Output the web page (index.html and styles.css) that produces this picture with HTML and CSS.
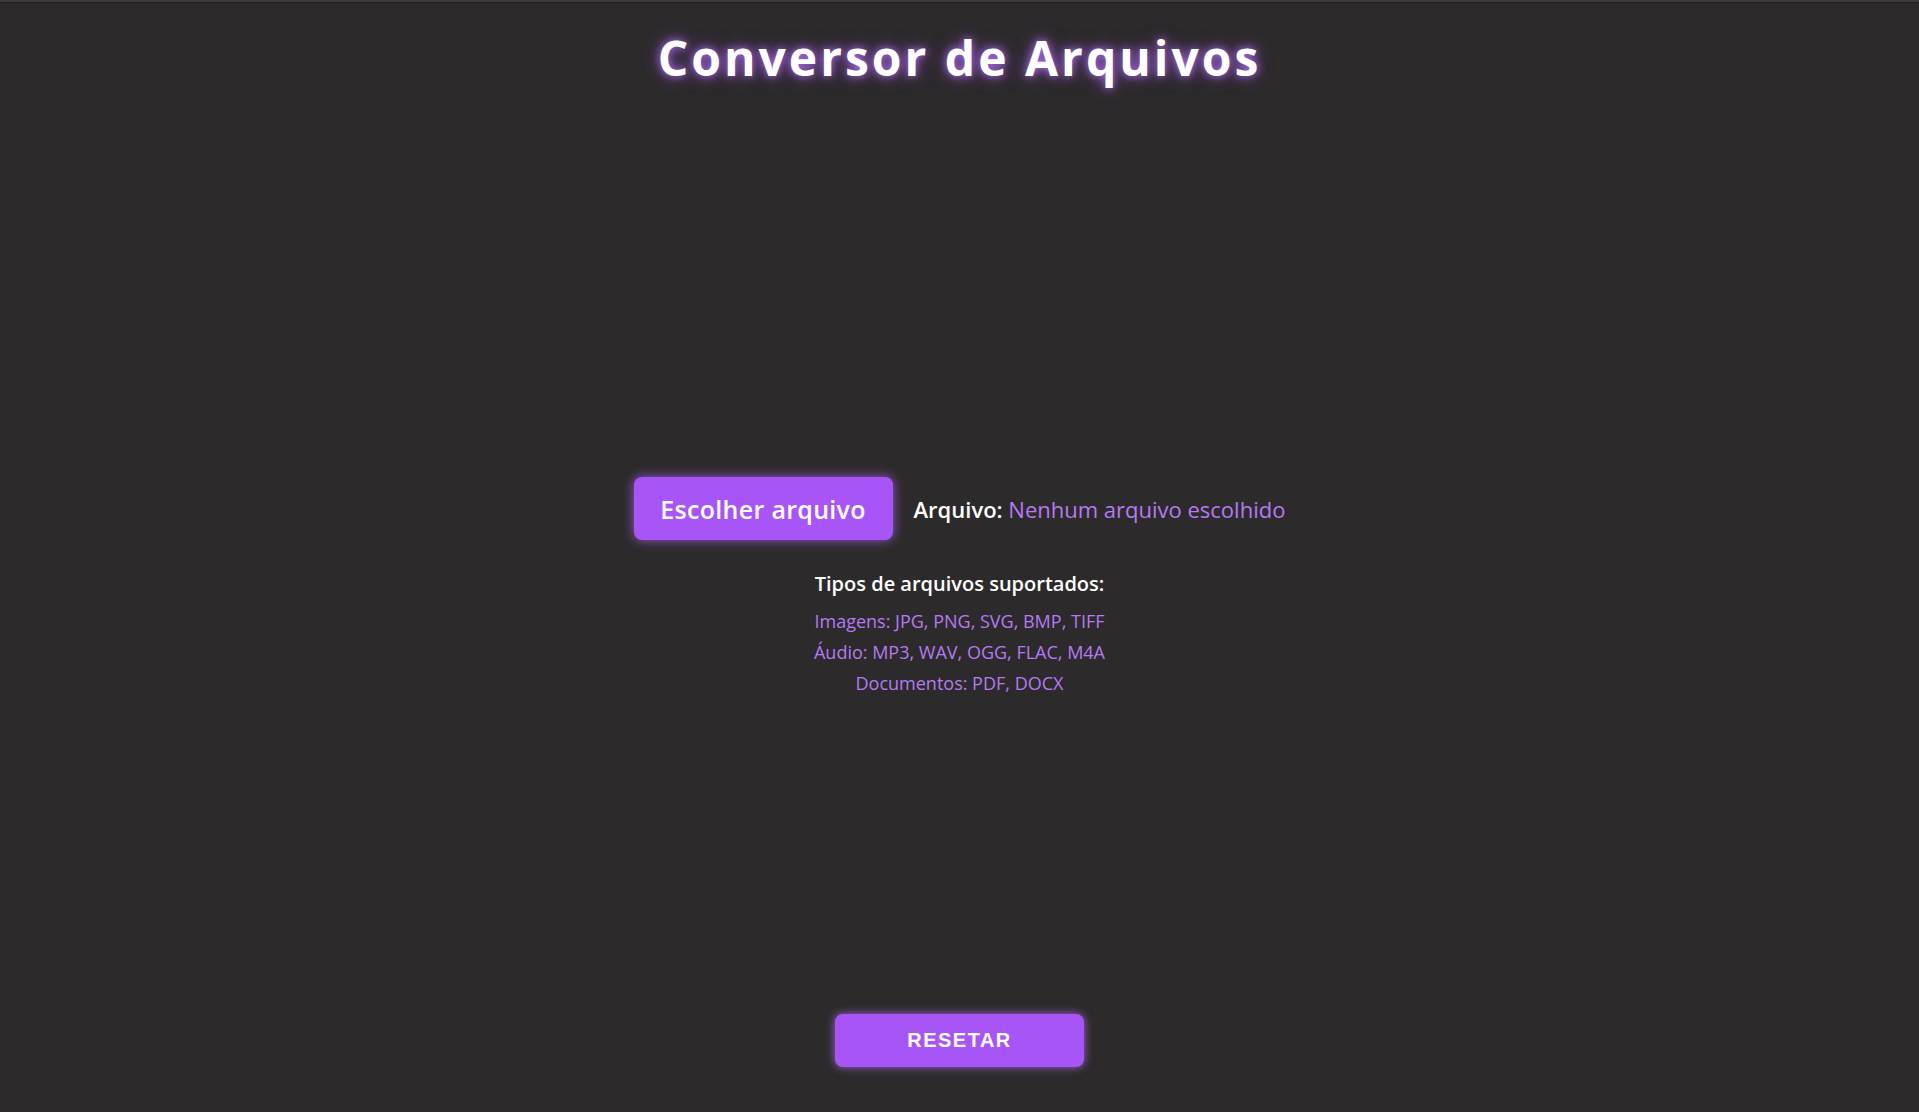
FILE: index.html
```html
<!DOCTYPE html>
<html lang="pt-BR">
<head>
<meta charset="utf-8">
<title>Conversor de Arquivos</title>
<link rel="stylesheet" href="styles.css">
</head>
<body>
<div class="topbar"></div>
<h1 class="title">Conversor de Arquivos</h1>
<main class="main">
  <div class="upload">
    <button class="choose">Escolher arquivo</button>
    <div class="file"><span class="file-label">Arquivo:</span> <span class="file-name">Nenhum arquivo escolhido</span></div>
  </div>
  <div class="types">
    <div class="types-title">Tipos de arquivos suportados:</div>
    <div class="types-line">Imagens: JPG, PNG, SVG, BMP, TIFF</div>
    <div class="types-line">Áudio: MP3, WAV, OGG, FLAC, M4A</div>
    <div class="types-line">Documentos: PDF, DOCX</div>
  </div>
</main>
<footer class="footer">
  <button class="reset">RESETAR</button>
</footer>
</body>
</html>
```
FILE: styles.css
```css
html, body {
  margin: 0;
  padding: 0;
}
body {
  background: #2c2a2b;
  color: #ffffff;
  font-family: "Open Sans", "DejaVu Sans", sans-serif;
  min-height: 100vh;
  display: flex;
  flex-direction: column;
  box-sizing: border-box;
}
.topbar {
  height: 2px;
  background: #3a3a3a;
  border-bottom: 1px solid #1e1e1e;
}
.title {
  margin: 26px 0 0;
  text-align: center;
  font-size: 48px;
  line-height: 58px;
  font-weight: 700;
  letter-spacing: 3px;
  color: #ffffff;
  text-shadow: 0 0 8px rgba(190, 120, 255, 0.9), 0 0 18px rgba(168, 85, 247, 0.6);
}
.main {
  display: flex;
  flex-direction: column;
  align-items: center;
  margin-top: 390px;
}
.upload {
  display: flex;
  align-items: center;
  gap: 21px;
}
.choose {
  width: 259px;
  height: 63px;
  border: none;
  border-radius: 8px;
  background: #a855f7;
  color: #ffffff;
  font-family: "Open Sans", "DejaVu Sans", sans-serif;
  font-size: 25px;
  font-weight: 600;
  letter-spacing: 0.3px;
  box-shadow: 0 0 12px rgba(180, 100, 255, 0.8);
  cursor: pointer;
}
.file {
  font-size: 22px;
}
.file-label {
  font-weight: 600;
  color: #ffffff;
}
.file-name {
  color: #b67af2;
}
.types {
  margin-top: 29px;
  text-align: center;
}
.types-title {
  font-size: 20px;
  line-height: 30px;
  font-weight: 600;
  color: #ffffff;
  margin-bottom: 7px;
}
.types-line {
  font-size: 18px;
  line-height: 31px;
  color: #b67af2;
}
.footer {
  margin-top: auto;
  display: flex;
  justify-content: center;
  padding-bottom: 45px;
}
.reset {
  width: 249px;
  height: 53px;
  border: none;
  border-radius: 8px;
  background: #a855f7;
  color: #ffffff;
  font-family: "Liberation Sans", Arial, sans-serif;
  font-size: 20px;
  font-weight: 700;
  letter-spacing: 1.5px;
  box-shadow: 0 0 10px rgba(190, 110, 255, 0.8);
  cursor: pointer;
}
```
